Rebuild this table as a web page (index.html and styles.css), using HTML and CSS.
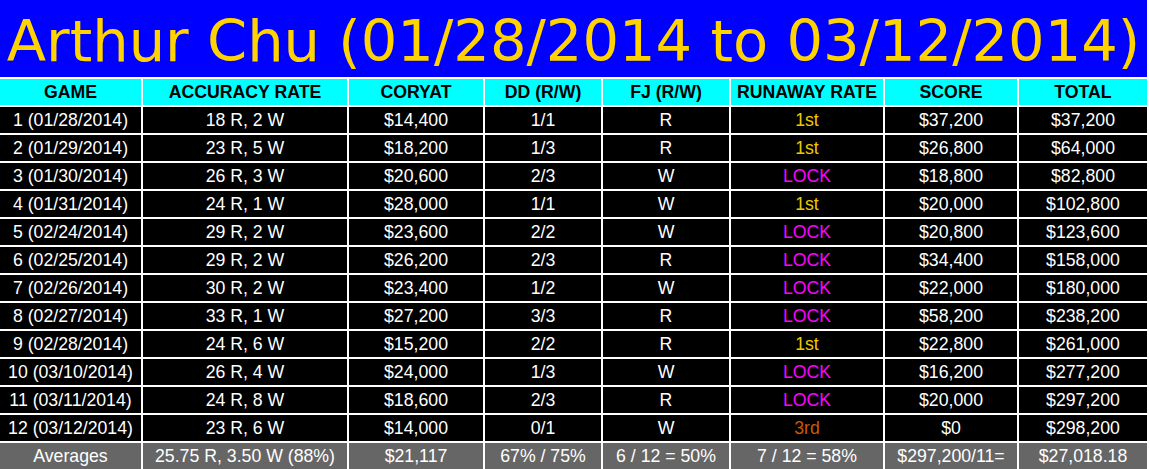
FILE: index.html
```html
<!DOCTYPE html>
<html>
<head>
<meta charset="utf-8">
<title>Arthur Chu</title>
<link rel="stylesheet" href="styles.css">
</head>
<body>
<div class="board">
  <div class="title">Arthur Chu (01/28/2014 to 03/12/2014)</div>

  <div class="hd">GAME</div><div class="hd">ACCURACY RATE</div><div class="hd">CORYAT</div><div class="hd">DD (R/W)</div><div class="hd">FJ (R/W)</div><div class="hd">RUNAWAY RATE</div><div class="hd">SCORE</div><div class="hd">TOTAL</div>

  <div class="c">1 (01/28/2014)</div><div class="c">18 R, 2 W</div><div class="c">$14,400</div><div class="c">1/1</div><div class="c">R</div><div class="c first">1st</div><div class="c">$37,200</div><div class="c">$37,200</div>
  <div class="c">2 (01/29/2014)</div><div class="c">23 R, 5 W</div><div class="c">$18,200</div><div class="c">1/3</div><div class="c">R</div><div class="c first">1st</div><div class="c">$26,800</div><div class="c">$64,000</div>
  <div class="c">3 (01/30/2014)</div><div class="c">26 R, 3 W</div><div class="c">$20,600</div><div class="c">2/3</div><div class="c">W</div><div class="c lock">LOCK</div><div class="c">$18,800</div><div class="c">$82,800</div>
  <div class="c">4 (01/31/2014)</div><div class="c">24 R, 1 W</div><div class="c">$28,000</div><div class="c">1/1</div><div class="c">W</div><div class="c first">1st</div><div class="c">$20,000</div><div class="c">$102,800</div>
  <div class="c">5 (02/24/2014)</div><div class="c">29 R, 2 W</div><div class="c">$23,600</div><div class="c">2/2</div><div class="c">W</div><div class="c lock">LOCK</div><div class="c">$20,800</div><div class="c">$123,600</div>
  <div class="c">6 (02/25/2014)</div><div class="c">29 R, 2 W</div><div class="c">$26,200</div><div class="c">2/3</div><div class="c">R</div><div class="c lock">LOCK</div><div class="c">$34,400</div><div class="c">$158,000</div>
  <div class="c">7 (02/26/2014)</div><div class="c">30 R, 2 W</div><div class="c">$23,400</div><div class="c">1/2</div><div class="c">W</div><div class="c lock">LOCK</div><div class="c">$22,000</div><div class="c">$180,000</div>
  <div class="c">8 (02/27/2014)</div><div class="c">33 R, 1 W</div><div class="c">$27,200</div><div class="c">3/3</div><div class="c">R</div><div class="c lock">LOCK</div><div class="c">$58,200</div><div class="c">$238,200</div>
  <div class="c">9 (02/28/2014)</div><div class="c">24 R, 6 W</div><div class="c">$15,200</div><div class="c">2/2</div><div class="c">R</div><div class="c first">1st</div><div class="c">$22,800</div><div class="c">$261,000</div>
  <div class="c">10 (03/10/2014)</div><div class="c">26 R, 4 W</div><div class="c">$24,000</div><div class="c">1/3</div><div class="c">W</div><div class="c lock">LOCK</div><div class="c">$16,200</div><div class="c">$277,200</div>
  <div class="c">11 (03/11/2014)</div><div class="c">24 R, 8 W</div><div class="c">$18,600</div><div class="c">2/3</div><div class="c">R</div><div class="c lock">LOCK</div><div class="c">$20,000</div><div class="c">$297,200</div>
  <div class="c">12 (03/12/2014)</div><div class="c">23 R, 6 W</div><div class="c">$14,000</div><div class="c">0/1</div><div class="c">W</div><div class="c third">3rd</div><div class="c">$0</div><div class="c">$298,200</div>

  <div class="avg">Averages</div><div class="avg">25.75 R, 3.50 W (88%)</div><div class="avg">$21,117</div><div class="avg">67% / 75%</div><div class="avg">6 / 12 = 50%</div><div class="avg">7 / 12 = 58%</div><div class="avg">$297,200/11=</div><div class="avg">$27,018.18</div>
</div>
</body>
</html>
```

FILE: styles.css
```css
html, body {
  margin: 0;
  padding: 0;
  background: #ffffff;
}

.board {
  display: grid;
  grid-template-columns: 141px 204px 134px 116px 126px 152px 132px 128px;
  grid-template-rows: 77px;
  grid-auto-rows: 26px;
  gap: 2px;
  width: 1147px;
  background: #ffffff;
  font-family: "Liberation Sans", Arial, sans-serif;
  font-size: 17.7px;
}

.title {
  grid-column: 1 / -1;
  background: #0000ff;
  color: #ffd200;
  font-family: "Comic Sans MS", "DejaVu Sans", sans-serif;
  font-size: 57.5px;
  line-height: 77px;
  padding-top: 3px;
  box-sizing: border-box;
  text-align: center;
  white-space: nowrap;
  overflow: hidden;
}

.hd {
  background: #00ffff;
  color: #000000;
  font-weight: bold;
  text-align: center;
  line-height: 26px;
  white-space: nowrap;
}

.c {
  background: #000000;
  color: #ffffff;
  text-align: center;
  line-height: 26px;
  white-space: nowrap;
}

.c.first { color: #f0c800; }
.c.lock { color: #ff00ff; }
.c.third { color: #c85a00; }

.avg {
  background: #666666;
  color: #ffffff;
  text-align: center;
  line-height: 26px;
  white-space: nowrap;
}
```
